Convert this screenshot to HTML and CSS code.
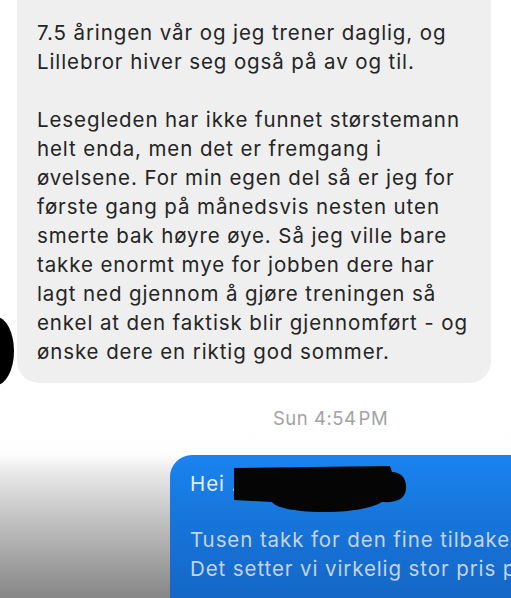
FILE: index.html
```html
<!DOCTYPE html>
<html lang="no">
<head>
<meta charset="utf-8">
<link rel="stylesheet" href="styles.css">
</head>
<body>
<main class="thread">
  <section class="incoming">
    <svg class="avatar-redact" width="16" height="70" viewBox="0 0 16 70" aria-hidden="true">
      <ellipse cx="-4" cy="35" rx="18" ry="34" fill="#000"/>
    </svg>
    <div class="bubble bubble-in">
      <p>7.5 åringen vår og jeg trener daglig, og<br>Lillebror hiver seg også på av og til.</p>
      <p class="gap">&nbsp;</p>
      <p>Lesegleden har ikke funnet størstemann<br>helt enda, men det er fremgang i<br>øvelsene. For min egen del så er jeg for<br>første gang på månedsvis nesten uten<br>smerte bak høyre øye. Så jeg ville bare<br>takke enormt mye for jobben dere har<br>lagt ned gjennom å gjøre treningen så<br>enkel at den faktisk blir gjennomført - og<br>ønske dere en riktig god sommer.</p>
    </div>
  </section>
  <div class="timestamp">Sun 4:54&#8202;PM</div>
  <section class="outgoing">
    <div class="bubble bubble-out">
      <p class="hei">Hei <span class="name">.</span>
        <svg class="name-redact" width="176" height="52" viewBox="0 0 176 52" aria-hidden="true">
          <path d="M2 6 L158 4 L160 10 C170 10 175 18 174 27 C173 37 165 41 150 40 C140 46 120 50 92 50 C64 50 44 46 40 40 L2 38 Z" fill="#050505"/>
        </svg>
      </p>
      <p class="gap-out">&nbsp;</p>
      <p class="nowrap">Tusen takk for den fine tilbakemeldingen!</p>
      <p class="nowrap">Det setter vi virkelig stor pris på.</p>
    </div>
  </section>
</main>
</body>
</html>
```
FILE: styles.css
```css
html, body {
  margin: 0;
  padding: 0;
  background: #ffffff;
}
body {
  width: 511px;
  height: 598px;
  overflow: hidden;
  font-family: "Inter", "Liberation Sans", sans-serif;
}
.thread {
  display: flex;
  flex-direction: column;
  height: 598px;
  overflow: hidden;
}
p {
  margin: 0;
}
.incoming {
  position: relative;
  padding-left: 17px;
}
.avatar-redact {
  position: absolute;
  left: 0;
  top: 316px;
}
.bubble-in {
  width: 474px;
  box-sizing: border-box;
  background: #efefef;
  border-radius: 0 0 22px 22px;
  padding: 18px 10px 17px 20px;
  color: #252525;
  font-size: 20.5px;
  line-height: 29px;
  letter-spacing: 0.9px;
  white-space: nowrap;
}
.timestamp {
  padding: 24px 0 0 273px;
  height: 45px;
  box-sizing: border-box;
  color: #a3a3a3;
  font-size: 18.5px;
  line-height: 22px;
  letter-spacing: 0.5px;
}
.outgoing {
  flex: 1;
  padding: 27px 0 0 170px;
  box-sizing: border-box;
  overflow: hidden;
  background: linear-gradient(180deg, #ffffff 0px, #fdfdfd 26px, #e9e9e9 44px, #cbcbcb 80px, #a8a8a8 125px, #868686 170px);
}
.bubble-out {
  height: 200px;
  border-radius: 22px 0 0 0;
  background: linear-gradient(180deg, #1a84f0 0px, #1776dc 60px, #1467c6 143px);
  padding: 14px 0 0 20px;
  color: #d6e2f2;
  font-size: 20.5px;
  line-height: 29px;
  letter-spacing: 0.9px;
  overflow: hidden;
}
.hei {
  position: relative;
  color: #e4ecf8;
}
.name-redact {
  position: absolute;
  left: 42px;
  top: -7px;
}
.gap-out {
  height: 27px;
}
.nowrap {
  white-space: nowrap;
  color: #c5d3e6;
}
```
